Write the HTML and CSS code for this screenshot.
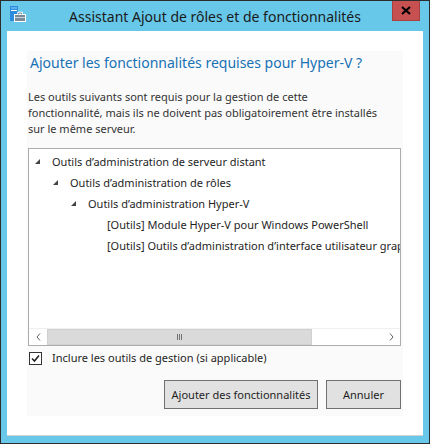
FILE: index.html
```html
<!DOCTYPE html>
<html lang="fr">
<head>
<meta charset="utf-8">
<title>Assistant Ajout de rôles et de fonctionnalités</title>
<link rel="stylesheet" href="styles.css">
</head>
<body>
<div class="window">
  <div class="titlebar">
    <svg class="app-icon" width="16" height="16" viewBox="0 0 16 16">
      <rect x="0" y="0" width="8" height="15" fill="#2b8ddc"/>
      <rect x="1" y="4" width="6" height="1" fill="#ffffff"/>
      <rect x="1" y="1" width="6" height="2" fill="#5fb0ef"/>
      <rect x="4" y="8" width="12" height="8" fill="#ffffff"/>
      <rect x="5" y="9" width="10" height="6" fill="#7b8a99"/>
      <rect x="5" y="11" width="10" height="1" fill="#c9d2da"/>
      <path d="M8 8.5V6.5H12V8.5" fill="none" stroke="#ffffff" stroke-width="1.4"/>
      <path d="M8.5 8.5V7H11.5V8.5" fill="none" stroke="#7b8a99" stroke-width="0.8"/>
    </svg>
    <div class="title">Assistant Ajout de rôles et de fonctionnalités</div>
    <div class="close">
      <svg width="10" height="9" viewBox="0 0 10 9"><path d="M1 1L9 8M9 1L1 8" stroke="#000" stroke-width="2.2"/></svg>
    </div>
  </div>
  <div class="client">
    <div class="panel">
      <h1 class="heading">Ajouter les fonctionnalités requises pour Hyper-V ?</h1>
      <p class="desc">Les outils suivants sont requis pour la gestion de cette<br>fonctionnalité, mais ils ne doivent pas obligatoirement être installés<br>sur le même serveur.</p>
      <div class="tree">
        <div class="tree-body">
          <div class="row lvl1"><span class="exp"></span>Outils d’administration de serveur distant</div>
          <div class="row lvl2"><span class="exp"></span>Outils d’administration de rôles</div>
          <div class="row lvl3"><span class="exp"></span>Outils d’administration Hyper-V</div>
          <div class="row lvl4">[Outils] Module Hyper-V pour Windows PowerShell</div>
          <div class="row lvl4">[Outils] Outils d’administration d’interface utilisateur graphique Hyper-V</div>
        </div>
        <div class="hscroll">
          <div class="sbtn">
            <svg width="5" height="8" viewBox="0 0 5 8"><path d="M4 0.5L1 4L4 7.5" fill="none" stroke="#606060" stroke-width="1"/></svg>
          </div>
          <div class="track">
            <div class="thumb"><span class="grip"></span><span class="grip"></span><span class="grip"></span></div>
          </div>
          <div class="sbtn">
            <svg width="5" height="8" viewBox="0 0 5 8"><path d="M1 0.5L4 4L1 7.5" fill="none" stroke="#606060" stroke-width="1"/></svg>
          </div>
        </div>
      </div>
      <label class="check">
        <span class="box"><svg width="11" height="11" viewBox="0 0 11 11"><path d="M2 5.5L4.5 8L9 2.5" fill="none" stroke="#222" stroke-width="1.6"/></svg></span>
        Inclure les outils de gestion (si applicable)
      </label>
      <div class="buttons">
        <button class="btn add">Ajouter des fonctionnalités</button>
        <button class="btn cancel">Annuler</button>
      </div>
    </div>
  </div>
</div>
</body>
</html>
```

FILE: styles.css
```css
* { box-sizing: border-box; }
html, body { margin: 0; padding: 0; }
body {
  font-family: "Noto Sans", "Open Sans", sans-serif;
  background: #ffffff;
}
.window {
  width: 430px;
  height: 444px;
  background: #67c8e9;
  border: 1px solid #2c2c2c;
  display: flex;
  flex-direction: column;
  overflow: hidden;
}
.titlebar {
  height: 30px;
  display: flex;
  align-items: flex-start;
  flex: none;
}
.app-icon {
  margin: 5px 0 0 9px;
  flex: none;
}
.title {
  flex: 1;
  min-width: 0;
  text-align: center;
  font-size: 14px;
  color: #1a1a1a;
  line-height: 31px;
  padding-left: 12px;
  white-space: nowrap;
}
.close {
  width: 28px;
  height: 20px;
  margin-right: 9px;
  background: #c75050;
  border: 1px solid #a84040;
  border-top: none;
  display: flex;
  align-items: center;
  justify-content: center;
  flex: none;
}
.client {
  margin: 0 6px 7px 6px;
  flex: 1;
  min-width: 0;
  min-height: 0;
  background: #ffffff;
  border-bottom: 1px solid #cfd3d6;
  padding: 20px 20px 19px 20px;
  display: flex;
}
.panel {
  flex: 1;
  min-width: 0;
  background: #fafafa;
  padding: 0 2px 7px 1px;
  display: flex;
  flex-direction: column;
}
.heading {
  margin: 0;
  padding: 2px 0 0 2px;
  font-size: 14px;
  font-weight: normal;
  color: #1771b5;
  line-height: 20px;
}
.desc {
  margin: 16px 0 0 0;
  font-size: 11px;
  line-height: 16px;
  color: #333333;
  white-space: nowrap;
}
.tree {
  margin-top: 11px;
  height: 198px;
  flex: none;
  border: 1px solid #acacac;
  background: #ffffff;
  display: flex;
  flex-direction: column;
  overflow: hidden;
}
.tree-body {
  flex: 1;
  min-width: 0;
  padding-top: 2px;
  overflow: hidden;
}
.row {
  height: 21px;
  line-height: 21px;
  font-size: 11px;
  color: #1e1e1e;
  white-space: nowrap;
  display: flex;
  align-items: center;
}
.lvl1 { padding-left: 6px; }
.lvl2 { padding-left: 24px; }
.lvl3 { padding-left: 42px; }
.lvl4 { padding-left: 78px; }
.exp {
  width: 5px;
  height: 5px;
  margin-right: 12px;
  background: #444444;
  clip-path: polygon(100% 0, 100% 100%, 0 100%);
  flex: none;
}
.hscroll {
  height: 17px;
  flex: none;
  display: flex;
  border-top: 1px solid #f0f0f0;
  background: #ffffff;
}
.sbtn {
  width: 18px;
  display: flex;
  align-items: center;
  justify-content: center;
  flex: none;
}
.track {
  flex: 1;
  display: flex;
}
.thumb {
  width: 265px;
  background: #dadada;
  border: 1px solid #d0d0d0;
  display: flex;
  align-items: center;
  justify-content: center;
  gap: 1px;
}
.grip {
  width: 1px;
  height: 6px;
  background: #707070;
}
.check {
  margin-top: 4px;
  display: flex;
  align-items: center;
  font-size: 11px;
  color: #1e1e1e;
  line-height: 16px;
}
.box {
  width: 13px;
  height: 13px;
  border: 1px solid #333333;
  background: #ffffff;
  margin: 0 10px 0 1px;
  display: flex;
  align-items: center;
  justify-content: center;
  flex: none;
}
.buttons {
  margin-top: auto;
  display: flex;
  justify-content: flex-end;
  gap: 8px;
}
.btn {
  height: 29px;
  padding: 0;
  background: #e1e1e1;
  border: 1px solid #707070;
  font-family: "Noto Sans", "Open Sans", sans-serif;
  font-size: 11px;
  color: #1e1e1e;
  border-radius: 0;
}
.add { width: 154px; }
.cancel { width: 75px; }
```
